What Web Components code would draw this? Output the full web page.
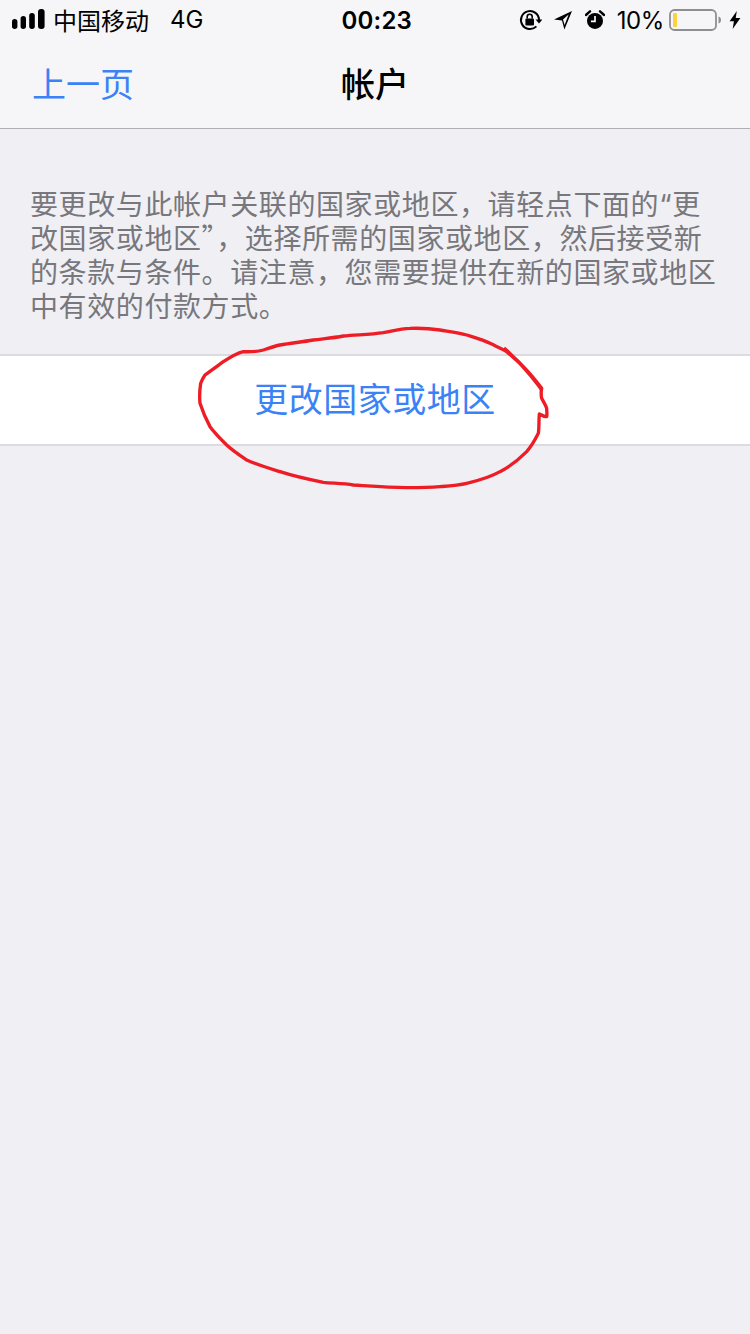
<!DOCTYPE html>
<html lang="zh-CN">
<head>
<meta charset="utf-8">
<title>帐户</title>
<style>
	html, body { margin: 0; padding: 0; background: #efeff4; }
	body { width: 750px; height: 1334px; overflow: hidden; position: relative; font-family: "Noto Sans CJK SC", "Noto Sans", sans-serif; }
	.open-quote { font-family: "Inter", "Liberation Sans", sans-serif; line-height: 0; }
</style>
</head>
<body>
<ios-status-bar carrier="中国移动" network="4G" time="00:23" battery="10%"></ios-status-bar>
<ios-nav-bar back="上一页" title="帐户"></ios-nav-bar>
<account-note>要更改与此帐户关联的国家或地区，请轻点下面的<span class="open-quote">“</span>更<br>改国家或地区”，选择所需的国家或地区，然后接受新<br>的条款与条件。请注意，您需要提供在新的国家或地区<br>中有效的付款方式。</account-note>
<action-cell>更改国家或地区</action-cell>
<ink-scribble></ink-scribble>
<script>
(function() {
	let statusTemplate = document.createElement("template");
	statusTemplate.innerHTML = `
		<style>
			:host { display: flex; align-items: center; height: 40px; background: #f6f6f8; color: #000; font-family: "Inter", "Liberation Sans", "Noto Sans CJK SC", sans-serif; font-size: 24px; position: relative; }
			.left { display: flex; align-items: center; flex: 1; padding-left: 12px; }
			.carrier { font-family: "Noto Sans CJK SC", sans-serif; margin-left: 8px; line-height: 40px; }
			.network { margin-left: 21px; line-height: 40px; }
			.time { font-weight: 600; width: 70px; text-align: center; white-space: nowrap; letter-spacing: 0.2px; }
			.right { display: flex; align-items: center; flex: 1; justify-content: flex-end; padding-right: 9px; }
			svg { display: block; }
			.pct { margin: 0 5px 0 12px; font-size: 24px; letter-spacing: -0.4px; }
		</style>
		<div class="left">
			<svg width="33" height="22" viewBox="0 0 33 22"><rect x="0" y="10" width="5.4" height="10" rx="2.7"/><rect x="8.6" y="7" width="5.4" height="13" rx="2.7"/><rect x="17.2" y="4" width="5.6" height="16" rx="2.7"/><rect x="26" y="0" width="6.6" height="20" rx="3"/></svg>
			<span class="carrier"></span><span class="network"></span>
		</div>
		<div class="time"></div>
		<div class="right">
			<svg width="24" height="24" viewBox="0 0 24 24" style="margin-right:11px"><path d="M21 12A9 9 0 1 0 18.4 18.4" fill="none" stroke="#000" stroke-width="2"/><path d="M17.5 11.5h7l-3.5 4z"/><rect x="7.4" y="10.5" width="8.6" height="7" rx="1"/><path d="M9.2 10.5V8.7a2.5 2.5 0 0 1 5 0v1.8" fill="none" stroke="#000" stroke-width="1.6"/></svg>
			<svg width="20" height="20" viewBox="0 0 20 20" style="margin-right:12px"><path d="M19 1L1 9.4l8 1.2L11.4 19.4z M15.6 4.6L10 9.6l1.6 5.4z" fill="#000" fill-rule="evenodd"/></svg>
			<svg width="20" height="20" viewBox="0 0 22 22"><circle cx="11" cy="12" r="8.8"/><path d="M11 6.5V12.5H6.5" fill="none" stroke="#fff" stroke-width="1.8"/><path d="M1 5.5L5.5 1.5M21 5.5L16.5 1.5" stroke="#000" stroke-width="2.6" stroke-linecap="round"/></svg>
			<span class="pct"></span>
			<svg width="52" height="24" viewBox="0 0 52 24" style="margin-right:8px"><rect x="1" y="2" width="46" height="20" rx="4.5" fill="none" stroke="#8e8e90" stroke-width="1.8"/><rect x="4" y="5" width="4" height="14" rx="1" fill="#fbd23f"/><path d="M49.5 8.5c1.6.4 2.5 1.7 2.5 3.5s-.9 3.1-2.5 3.5z" fill="#8e8e90"/></svg>
			<svg width="12" height="18" viewBox="0 0 12 20"><path d="M8 0L0 11.5h4.8L3.4 20 12 7.8H6.8z"/></svg>
		</div>
	`;
	class IosStatusBar extends HTMLElement {
		constructor() {
			super();
			this._shadowRoot = this.attachShadow({mode: "open"});
			this._shadowRoot.appendChild(statusTemplate.content.cloneNode(true));
			this._shadowRoot.querySelector(".carrier").textContent = this.getAttribute("carrier");
			this._shadowRoot.querySelector(".network").textContent = this.getAttribute("network");
			this._shadowRoot.querySelector(".time").textContent = this.getAttribute("time");
			this._shadowRoot.querySelector(".pct").textContent = this.getAttribute("battery");
		}
	}
	customElements.define("ios-status-bar", IosStatusBar);

	let navTemplate = document.createElement("template");
	navTemplate.innerHTML = `
		<style>
			:host { display: grid; grid-template-columns: 1fr auto 1fr; align-items: center; height: 89px; box-sizing: border-box; padding: 0 0 2px 32px; background: #f6f6f8; border-bottom: 1px solid #b0b0b4; font-family: "Noto Sans CJK SC", sans-serif; }
			.back { color: #3b82f6; font-size: 34px; line-height: 44px; }
			.title { color: #000; font-size: 34px; font-weight: 500; line-height: 44px; margin-right: 32px; }
		</style>
		<div class="back"></div>
		<div class="title"></div>
		<div></div>
	`;
	class IosNavBar extends HTMLElement {
		constructor() {
			super();
			this._shadowRoot = this.attachShadow({mode: "open"});
			this._shadowRoot.appendChild(navTemplate.content.cloneNode(true));
			this._shadowRoot.querySelector(".back").textContent = this.getAttribute("back");
			this._shadowRoot.querySelector(".title").textContent = this.getAttribute("title");
		}
	}
	customElements.define("ios-nav-bar", IosNavBar);

	let noteTemplate = document.createElement("template");
	noteTemplate.innerHTML = `
		<style>
			:host { display: block; padding: 57px 0 32px 30px; color: #77777c; font-family: "Noto Sans CJK SC", sans-serif; font-size: 28px; line-height: 34px; letter-spacing: 0.6px; white-space: nowrap; }
		</style>
		<slot></slot>
	`;
	class AccountNote extends HTMLElement {
		constructor() {
			super();
			this._shadowRoot = this.attachShadow({mode: "open"});
			this._shadowRoot.appendChild(noteTemplate.content.cloneNode(true));
		}
	}
	customElements.define("account-note", AccountNote);

	let cellTemplate = document.createElement("template");
	cellTemplate.innerHTML = `
		<style>
			:host { display: flex; justify-content: center; align-items: center; height: 92px; box-sizing: border-box; padding-bottom: 5px; background: #fff; border-top: 2px solid #dcdce0; border-bottom: 2px solid #dcdce0; color: #3b82f6; font-family: "Noto Sans CJK SC", sans-serif; font-size: 34px; letter-spacing: 0.5px; }
		</style>
		<slot></slot>
	`;
	class ActionCell extends HTMLElement {
		constructor() {
			super();
			this._shadowRoot = this.attachShadow({mode: "open"});
			this._shadowRoot.appendChild(cellTemplate.content.cloneNode(true));
		}
	}
	customElements.define("action-cell", ActionCell);

	let inkTemplate = document.createElement("template");
	inkTemplate.innerHTML = `
		<style>
			:host { display: block; position: absolute; left: 180px; top: 320px; width: 390px; height: 180px; pointer-events: none; }
			svg { display: block; }
		</style>
		<svg width="390" height="180" viewBox="0 0 1170 540" fill="none" stroke="#ee1c25" stroke-width="10" stroke-linejoin="round"><path d="M190 95C210 96 235 94 250 90C268 84 285 78 300 75C335 69 365 66 400 60C430 56 460 54 490 48C530 44 570 44 610 38C640 32 665 25 690 25C720 24 755 26 780 30C810 35 835 38 860 45C885 53 910 60 930 70C950 80 965 85 980 95C1000 112 1015 125 1030 140C1050 160 1070 185 1085 205C1083 215 1083 225 1085 235C1090 245 1097 255 1100 265C1100 275 1102 283 1100 290C1092 290 1085 286 1078 282C1076 300 1078 320 1075 340C1065 360 1055 378 1040 395C1015 420 990 440 960 455C930 472 895 482 860 490C835 496 805 498 780 500C745 503 715 503 680 503C625 502 570 498 520 495C490 490 460 490 430 487C385 478 340 468 300 455C265 444 232 434 200 420C178 405 158 392 140 375C122 357 105 340 90 320C78 298 68 275 60 250C58 230 59 210 62 190C66 180 70 172 75 165C92 152 112 138 130 125C150 112 170 100 190 95Z"/><path d="M972 84C1000 108 1030 140 1050 165C1062 180 1075 195 1085 210"/></svg>
	`;
	class InkScribble extends HTMLElement {
		constructor() {
			super();
			this._shadowRoot = this.attachShadow({mode: "open"});
			this._shadowRoot.appendChild(inkTemplate.content.cloneNode(true));
		}
	}
	customElements.define("ink-scribble", InkScribble);
})();
</script>
</body>
</html>
